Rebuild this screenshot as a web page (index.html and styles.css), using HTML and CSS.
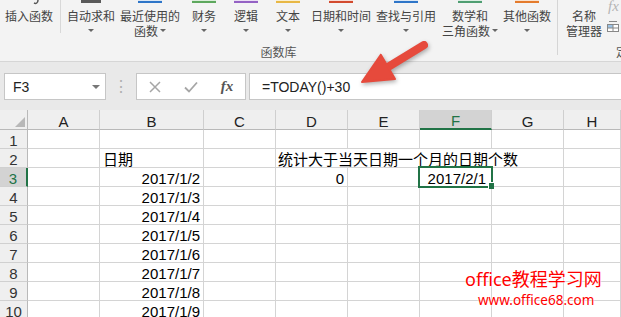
FILE: index.html
```html
<!DOCTYPE html>
<html lang="zh-CN">
<head>
  <meta charset="UTF-8">
  <title>函数库 - TODAY</title>
  <link rel="stylesheet" href="styles.css">
</head>
<body>
  <div class="ribbon">
    <div class="group group-lib">
      <div class="buttons">
        <div class="btn btn-insert">
          <svg class="stub-svg" width="24" height="8" viewBox="0 0 24 8"><path d="M21 0 C21 3 19 4 17 3" fill="none" stroke="#555" stroke-width="1.5"/></svg>
          <span class="line">插入函数</span>
        </div>
        <div class="sep"></div>
        <div class="btn btn-sum">
          <span class="stub stub-dark"></span>
          <span class="line">自动求和</span>
          <span class="line"><i class="drop"></i></span>
        </div>
        <div class="btn btn-recent">
          <span class="stub stub-blue"></span>
          <span class="line">最近使用的</span>
          <span class="line">函数 <i class="drop"></i></span>
        </div>
        <div class="btn btn-finance">
          <span class="stub stub-green"></span>
          <span class="line">财务</span>
          <span class="line"><i class="drop"></i></span>
        </div>
        <div class="btn btn-logic">
          <span class="stub stub-purple"></span>
          <span class="line">逻辑</span>
          <span class="line"><i class="drop"></i></span>
        </div>
        <div class="btn btn-text">
          <span class="stub stub-yellow"></span>
          <span class="line">文本</span>
          <span class="line"><i class="drop"></i></span>
        </div>
        <div class="btn btn-date">
          <span class="stub stub-red"></span>
          <span class="line">日期和时间</span>
          <span class="line"><i class="drop"></i></span>
        </div>
        <div class="btn btn-lookup">
          <span class="stub stub-blue"></span>
          <span class="line">查找与引用</span>
          <span class="line"><i class="drop"></i></span>
        </div>
        <div class="btn btn-math">
          <span class="stub stub-teal"></span>
          <span class="line">数学和</span>
          <span class="line">三角函数 <i class="drop"></i></span>
        </div>
        <div class="btn btn-other">
          <span class="stub stub-orange"></span>
          <span class="line">其他函数</span>
          <span class="line"><i class="drop"></i></span>
        </div>
      </div>
      <div class="group-label">函数库</div>
    </div>
    <div class="group-sep"></div>
    <div class="group group-names">
      <div class="buttons">
        <div class="btn btn-names">
          <span class="stub"></span>
          <span class="line">名称</span>
          <span class="line">管理器</span>
        </div>
        <div class="mini">
          <span class="mini-fx">fx</span>
          <svg width="14" height="12" viewBox="0 0 14 12"><rect x="1.5" y="3.5" width="11" height="7" fill="#fff" stroke="#888"/><rect x="2" y="4" width="5" height="3" fill="#9cc3e6"/><path d="M1.5 7h11M7 3.5v7" stroke="#888"/><path d="M3 0.5h8" stroke="#888"/></svg>
        </div>
      </div>
      <div class="group-label names-label">定义的名称</div>
    </div>
  </div>

  <div class="formula-bar">
    <div class="name-box">
      <span>F3</span>
      <i class="name-caret"></i>
    </div>
    <div class="dots">⋮</div>
    <div class="fx-box">
      <span class="fx-slot">
        <svg width="12" height="12" viewBox="0 0 12 12"><path d="M1 1L11 11M11 1L1 11" stroke="#a6a6a6" stroke-width="1.5"/></svg>
      </span>
      <span class="fx-slot">
        <svg width="14" height="12" viewBox="0 0 14 12"><path d="M1 6.5L5 10.5L13 1.5" fill="none" stroke="#a6a6a6" stroke-width="1.8"/></svg>
      </span>
      <span class="fx-slot fx-text">fx</span>
    </div>
    <div class="formula-input">=TODAY()+30</div>
  </div>

  <div class="sheet">
    <div class="c corner"><i class="corner-tri"></i></div>
    <div class="c hd">A</div>
    <div class="c hd">B</div>
    <div class="c hd">C</div>
    <div class="c hd">D</div>
    <div class="c hd">E</div>
    <div class="c hd sel">F</div>
    <div class="c hd">G</div>
    <div class="c hd">H</div>

    <div class="c rh">1</div>
    <div class="c"></div><div class="c"></div><div class="c"></div><div class="c"></div><div class="c"></div><div class="c"></div><div class="c"></div><div class="c"></div>

    <div class="c rh">2</div>
    <div class="c"></div>
    <div class="c">日期</div>
    <div class="c"></div>
    <div class="c span4">统计大于当天日期一个月的日期个数</div>
    <div class="c"></div>

    <div class="c rh sel">3</div>
    <div class="c"></div>
    <div class="c num">2017/1/2</div>
    <div class="c"></div>
    <div class="c num">0</div>
    <div class="c"></div>
    <div class="c num active">2017/2/1</div>
    <div class="c"></div>
    <div class="c"></div>

    <div class="c rh">4</div>
    <div class="c"></div><div class="c num">2017/1/3</div><div class="c"></div><div class="c"></div><div class="c"></div><div class="c"></div><div class="c"></div><div class="c"></div>

    <div class="c rh">5</div>
    <div class="c"></div><div class="c num">2017/1/4</div><div class="c"></div><div class="c"></div><div class="c"></div><div class="c"></div><div class="c"></div><div class="c"></div>

    <div class="c rh">6</div>
    <div class="c"></div><div class="c num">2017/1/5</div><div class="c"></div><div class="c"></div><div class="c"></div><div class="c"></div><div class="c"></div><div class="c"></div>

    <div class="c rh">7</div>
    <div class="c"></div><div class="c num">2017/1/6</div><div class="c"></div><div class="c"></div><div class="c"></div><div class="c"></div><div class="c"></div><div class="c"></div>

    <div class="c rh">8</div>
    <div class="c"></div><div class="c num">2017/1/7</div><div class="c"></div><div class="c"></div><div class="c"></div><div class="c"></div><div class="c"></div><div class="c"></div>

    <div class="c rh">9</div>
    <div class="c"></div><div class="c num">2017/1/8</div><div class="c"></div><div class="c"></div><div class="c"></div><div class="c"></div><div class="c"></div><div class="c"></div>

    <div class="c rh">10</div>
    <div class="c"></div><div class="c num">2017/1/9</div><div class="c"></div><div class="c"></div><div class="c"></div><div class="c"></div><div class="c"></div><div class="c"></div>
  </div>

  <svg class="pointer" width="80" height="52" viewBox="0 0 80 52">
    <path d="M33 31L69 9" stroke="#e64a3c" stroke-width="8" stroke-linecap="round"/>
    <path d="M7 46L40 43L25.8 18.7Z" fill="#e64a3c" stroke="#e64a3c" stroke-width="2" stroke-linejoin="round"/>
  </svg>

  <div class="watermark">
    <div class="wm-title">office教程学习网</div>
    <div class="wm-url">www.office68.com</div>
  </div>
</body>
</html>
```

FILE: styles.css
```css
body {
  margin: 0;
  width: 621px;
  height: 317px;
  overflow: hidden;
  position: relative;
  font-family: "Liberation Sans", "Noto Sans CJK SC", sans-serif;
  background: #fff;
}

/* ribbon */
.ribbon {
  display: flex;
  height: 61px;
  background: #f3f3f3;
  border-bottom: 1px solid #d6d6d6;
  overflow: hidden;
}
.group {
  display: flex;
  flex-direction: column;
  flex-shrink: 0;
}
.group-lib {
  width: 557px;
}
.group-names {
  width: 140px;
}
.buttons {
  display: flex;
  height: 44px;
}
.btn {
  display: flex;
  flex-direction: column;
  align-items: center;
  flex-shrink: 0;
  font-family: "Noto Sans CJK SC", sans-serif;
  font-size: 12px;
  line-height: 15px;
  color: #444;
  white-space: nowrap;
}
.btn-insert { width: 58px; }
.btn-sum { width: 60px; }
.btn-recent { width: 58px; }
.btn-finance { width: 50px; }
.btn-logic { width: 34px; }
.btn-text { width: 50px; }
.btn-date { width: 56px; }
.btn-lookup { width: 74px; }
.btn-math { width: 54px; }
.btn-other { width: 60px; }
.btn-names { width: 40px; margin-left: 6px; }

.stub-svg {
  display: block;
}
.stub {
  display: block;
  width: 24px;
  height: 3px;
  margin-bottom: 5px;
  box-sizing: border-box;
}
.stub-dark { width: 20px; background: #5a5a5a; }
.stub-blue { background: #dbe8f6; border-bottom: 2px solid #2e75c8; }
.stub-green { background: #dcefdc; border-bottom: 2px solid #5ea85e; }
.stub-purple { background: #ece0f5; border-bottom: 2px solid #9462c4; }
.stub-yellow { background: #fbf0d2; border-bottom: 2px solid #e8b845; }
.stub-red { background: #f8dcd6; border-bottom: 2px solid #d24a2e; }
.stub-teal { background: #dcefe4; border-bottom: 2px solid #4f9e72; }
.stub-orange { background: #fbe3cf; border-bottom: 2px solid #e47b2c; }

.line {
  display: flex;
  align-items: center;
  height: 15px;
  overflow: visible;
}
.drop {
  display: inline-block;
  width: 0;
  height: 0;
  margin-left: 2px;
  border-left: 3px solid transparent;
  border-right: 3px solid transparent;
  border-top: 3px solid #666;
}
.btn-sum .drop,
.btn-finance .drop,
.btn-logic .drop,
.btn-text .drop,
.btn-date .drop,
.btn-lookup .drop,
.btn-other .drop {
  margin-left: 0;
}
.sep {
  width: 1px;
  height: 33px;
  margin-left: 2px;
  background: #d8d8d8;
  flex-shrink: 0;
}
.group-sep {
  width: 1px;
  height: 55px;
  background: #d5d5d5;
  flex-shrink: 0;
}
.group-label {
  font-family: "Noto Sans CJK SC", sans-serif;
  font-size: 12px;
  line-height: 15px;
  color: #555;
  text-align: center;
  white-space: nowrap;
}
.names-label {
  text-align: left;
  padding-left: 58px;
}
.mini {
  display: flex;
  flex-direction: column;
  align-items: flex-start;
  gap: 9px;
  padding-left: 2px;
}
.mini-fx {
  font-family: "Liberation Serif", serif;
  font-style: italic;
  font-size: 15px;
  line-height: 12px;
  color: #b5b5b5;
  padding-left: 2px;
}

/* formula bar */
.formula-bar {
  display: flex;
  align-items: stretch;
  height: 27px;
  padding: 11px 0 10px;
  background: #e9e9e9;
  font-size: 14px;
  color: #222;
}
.name-box {
  display: flex;
  align-items: center;
  justify-content: space-between;
  width: 102px;
  margin-left: 4px;
  padding: 0 5px 0 8px;
  box-sizing: border-box;
  background: #fff;
  border: 1px solid #c6c6c6;
}
.name-caret {
  width: 0;
  height: 0;
  border-left: 4px solid transparent;
  border-right: 4px solid transparent;
  border-top: 4px solid #777;
}
.dots {
  width: 30px;
  display: flex;
  align-items: center;
  justify-content: center;
  color: #b0b0b0;
  font-size: 16px;
}
.fx-box {
  display: flex;
  width: 110px;
  box-sizing: border-box;
  background: #fff;
  border: 1px solid #c6c6c6;
}
.fx-slot {
  width: 36px;
  display: flex;
  align-items: center;
  justify-content: center;
}
.fx-text {
  font-family: "Liberation Serif", serif;
  font-style: italic;
  font-weight: bold;
  font-size: 15px;
  color: #555;
}
.formula-input {
  flex: 1;
  margin-left: 3px;
  padding-left: 12px;
  display: flex;
  align-items: center;
  background: #fff;
  border: 1px solid #c6c6c6;
  border-right: none;
}

/* sheet grid */
.sheet {
  display: grid;
  grid-template-columns: 28px 72px 104px 72px 72px 72px 72px 72px 1fr;
  grid-template-rows: 20px repeat(10, 19px);
  background: #fff;
}
.c {
  display: flex;
  align-items: flex-end;
  min-width: 0;
  padding: 0 3px;
  border-right: 1px solid #d4d4d4;
  border-bottom: 1px solid #d4d4d4;
  font-size: 15px;
  line-height: 15px;
  color: #000;
  white-space: nowrap;
}
.num {
  justify-content: flex-end;
}
.span4 {
  grid-column: 5 / span 4;
  padding-left: 2px;
}
.hd {
  justify-content: center;
  background: #efefef;
  border-right-color: #cfcfcf;
  border-bottom-color: #b9b9b9;
  color: #222;
}
.rh {
  justify-content: center;
  padding: 0;
  background: #efefef;
  border-right-color: #b9b9b9;
  border-bottom-color: #d0d0d0;
  color: #333;
}
.hd.sel {
  background: #d3d3d3;
  border-bottom: 2px solid #217346;
  color: #217346;
}
.rh.sel {
  background: #d3d3d3;
  border-right: 2px solid #217346;
  color: #217346;
}
.corner {
  justify-content: flex-end;
  padding: 0 2px 2px 0;
  background: #efefef;
  border-right-color: #b9b9b9;
  border-bottom-color: #b9b9b9;
}
.corner-tri {
  width: 0;
  height: 0;
  border-left: 10px solid transparent;
  border-bottom: 10px solid #b8b8b8;
}
.active {
  position: relative;
  padding-right: 5px;
}
.active::before {
  content: "";
  position: absolute;
  top: -2px;
  left: -2px;
  right: -2px;
  bottom: -2px;
  border: 2px solid #217346;
}
.active::after {
  content: "";
  position: absolute;
  right: -3px;
  bottom: -3px;
  width: 5px;
  height: 6px;
  background: #217346;
  box-shadow: -1px -1px 0 #fff;
}

/* overlays */
.pointer {
  position: absolute;
  left: 355px;
  top: 36px;
  filter: drop-shadow(1px 2px 2px rgba(0, 0, 0, 0.3));
}
.watermark {
  position: absolute;
  left: 465px;
  top: 268px;
  color: #f00;
  font-family: "Noto Sans", "Noto Sans CJK SC", sans-serif;
  text-shadow: 0 0 2px #fff, 0 0 2px #fff;
  white-space: nowrap;
}
.wm-title {
  font-size: 18px;
  line-height: 22px;
}
.wm-url {
  font-size: 13.5px;
  line-height: 16px;
  margin: 2px 0 0 13px;
}
```
